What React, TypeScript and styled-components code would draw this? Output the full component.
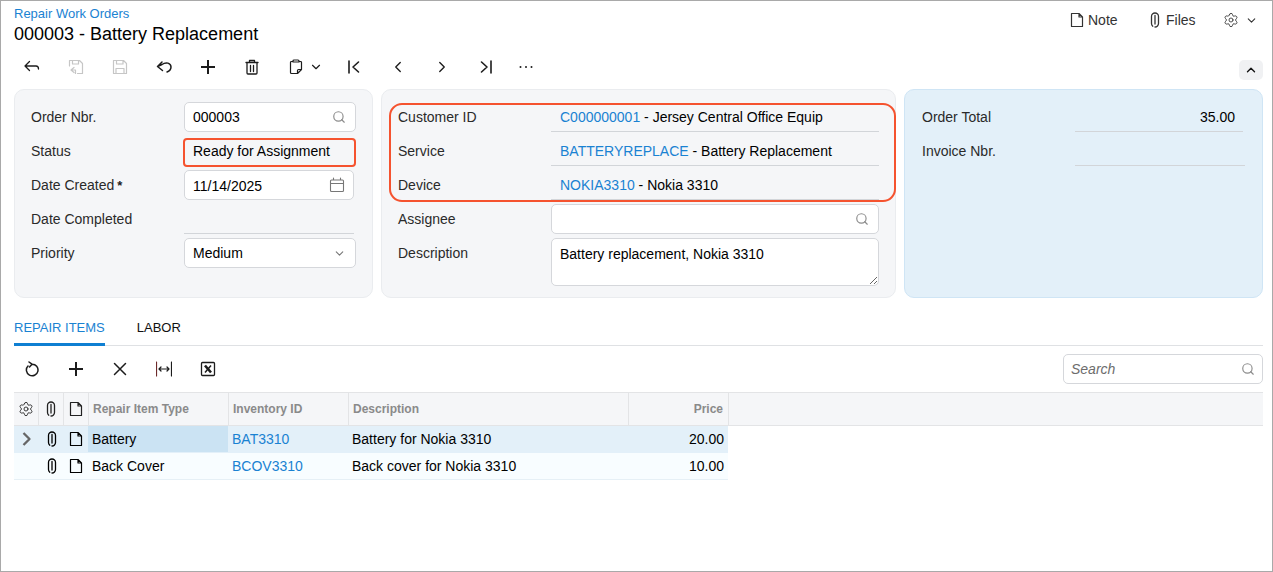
import React from "react";
import styled, { createGlobalStyle } from "styled-components";
import { Search as SearchGlyph, Settings, ChevronDown, ChevronUp, ChevronRight, ChevronLeft } from "lucide-react";

const Global = createGlobalStyle`
  html, body { margin: 0; padding: 0; background: #fff; }
  body { font-family: "Liberation Sans", Arial, sans-serif; font-size: 14px; color: #000; }
`;

const Frame = styled.div`
  width: 1273px; height: 572px; box-sizing: border-box;
  border: 1px solid #a9a9a9; background: #fff; overflow: hidden;
`;
const Header = styled.header`
  height: 50px; padding: 0 14px 0 13px; display: flex; justify-content: space-between; box-sizing: border-box;
`;
const Titles = styled.div`display: flex; flex-direction: column; padding-top: 5px;`;
const Crumb = styled.a`font-size: 13px; line-height: 15px; color: #1a82d2;`;
const Title = styled.h1`margin: 2px 0 0; font-size: 18px; line-height: 22px; font-weight: 400; color: #000;`;
const HeaderActions = styled.div`display: flex; align-items: center; height: 38px; color: #333;`;
const HeaderAction = styled.div<{ $w: number; $gap?: number }>`
  display: flex; align-items: center; gap: ${p => p.$gap ?? 3}px; width: ${p => p.$w}px; font-size: 14px; color: #333;
`;

const Toolbar = styled.div`
  display: flex; align-items: center; height: 32px; padding: 0 9px 0 9px;
`;
const ToolButton = styled.button<{ $w?: number; $off?: boolean }>`
  width: ${p => p.$w ?? 44}px; height: 32px; padding: 0; border: 0; background: none;
  display: flex; align-items: center; justify-content: center; gap: 4px;
  color: ${p => (p.$off ? "#c6c6c6" : "#1c1c1c")};
`;
const SplitButton = styled(ToolButton)`
  justify-content: flex-start; padding-left: 14px; gap: 5px;
`;
const Collapse = styled.button`
  margin: 6px 0 0 auto; width: 24px; height: 20px; padding: 0; border: 0; border-radius: 5px;
  background: #f0f1f3; color: #111; display: flex; align-items: center; justify-content: center;
`;

const Panels = styled.div`display: flex; gap: 8px; margin: 6px 9px 0 13px;`;
const Panel = styled.section<{ $w: number; $blue?: boolean }>`
  position: relative; box-sizing: border-box; width: ${p => p.$w}px; height: 209px;
  padding: 10px 16px 0 ${p => (p.$blue ? 17 : 16)}px; border-radius: 10px;
  border: 1px solid ${p => (p.$blue ? "#cfe5f5" : "#eaecef")};
  background: ${p => (p.$blue ? "#e3f0f9" : "#f5f6f8")};
`;
const Row = styled.div`display: flex; align-items: center; height: 34px;`;
const TopRow = styled(Row)`align-items: flex-start; height: auto;`;
const Label = styled.div`width: 153px; flex: none; color: #2a2a2a; line-height: 16px;`;
const TopLabel = styled(Label)`padding-top: 9px;`;
const Req = styled.span`color: #222; margin-left: -1px; font-weight: 700; font-size: 13px;`;
const Field = styled.div<{ $w: number }>`
  box-sizing: border-box; width: ${p => p.$w}px; height: 30px; padding: 0 8px 0 8px;
  display: flex; align-items: center; justify-content: space-between;
  background: #fff; border: 1px solid #d5d7db; border-radius: 5px; color: #000;
`;
const DateText = styled.span`padding-top: 1px;`;
const Static = styled.div<{ $w: number; $line?: boolean; $right?: boolean }>`
  box-sizing: border-box; width: ${p => p.$w}px; height: 30px; padding: 0 ${p => (p.$right ? 8 : 9)}px;
  display: flex; align-items: center; justify-content: ${p => (p.$right ? "flex-end" : "flex-start")};
  white-space: pre; color: #000;
  border-bottom: ${p => (p.$line ? "1px solid #d2d5d9" : "1px solid transparent")};
`;
const Link = styled.a`color: #1a82d2;`;
const Area = styled.textarea`
  box-sizing: border-box; display: block; width: 328px; height: 48px; margin: 2px 0 0; padding: 7px 8px;
  border: 1px solid #d5d7db; border-radius: 5px; background: #fff; outline: none;
  font: 14px/16px "Liberation Sans", Arial, sans-serif; color: #000;
`;
const Lookup = styled(SearchGlyph)`margin-right: 1px; color: #8d8d8d; flex: none;`;
const SelectArrow = styled(ChevronDown)`margin-right: 1px; color: #777; flex: none;`;
const CalendarSlot = styled.span`color: #777; display: block;`;
const StatusHighlight = styled.div`
  position: absolute; left: 168px; top: 48px; width: 173px; height: 29px; box-sizing: border-box;
  border: 2px solid #f5532f; border-radius: 4px; pointer-events: none;
`;
const CustomerHighlight = styled.div`
  position: absolute; left: 7px; top: 13px; width: 507px; height: 99px; box-sizing: border-box;
  border: 2px solid #f5532f; border-radius: 13px; pointer-events: none;
`;

const Tabs = styled.nav`
  display: flex; gap: 32px; height: 33px; margin: 15px 9px 0 13px; box-sizing: border-box;
  border-bottom: 1px solid #dfe1e4;
`;
const Tab = styled.div<{ $on?: boolean }>`
  height: 33px; box-sizing: border-box; line-height: 30px; font-size: 13px; 
  color: ${p => (p.$on ? "#1a82d2" : "#111")};
  border-bottom: ${p => (p.$on ? "3px solid #0f7fd2" : "0")};
`;
const GridBar = styled.div`
  display: flex; align-items: center; height: 46px; padding: 0 9px 0 9px; box-sizing: border-box;
`;
const SearchBox = styled.label`
  margin-left: auto; box-sizing: border-box; width: 200px; height: 30px; padding: 0 6px 0 7px;
  display: flex; align-items: center; border: 1px solid #d5d7db; border-radius: 5px; background: #fff;
`;
const SearchInput = styled.input`
  flex: 1; min-width: 0; border: 0; outline: 0; padding: 0; background: none;
  font: italic 14px "Liberation Sans", Arial, sans-serif; color: #666;
  &::placeholder { color: #6d6d6d; opacity: 1; }
`;

const Grid = styled.div`margin: 0 9px 0 13px;`;
const HeadRow = styled.div`
  display: flex; height: 34px; box-sizing: border-box; background: #f5f6f8;
  border-top: 1px solid #e3e4e6; border-bottom: 1px solid #e3e4e6;
`;
const HeadCell = styled.div<{ $w: number; $right?: boolean; $icon?: boolean }>`
  box-sizing: border-box; width: ${p => p.$w}px; flex: none; display: flex; align-items: center;
  justify-content: ${p => (p.$icon ? "center" : p.$right ? "flex-end" : "flex-start")};
  padding: ${p => (p.$icon ? "0" : p.$right ? "0 5px 0 4px" : "0 4px")}; border-right: 1px solid #e3e4e6;
  font-size: 12px; font-weight: 700; color: #8a8a8a; text-align: ${p => (p.$right ? "right" : "left")};
  & > svg { color: #222; }
`;
const BodyRow = styled.div<{ $on?: boolean }>`
  display: flex; width: 714px; height: 27px; box-sizing: border-box;
  background: ${p => (p.$on ? "#e3f0f9" : "#f8fdff")};
  border-bottom: 1px solid ${p => (p.$on ? "#e3f0f9" : "#e6f0f6")};
`;
const Cell = styled.div<{ $w: number; $right?: boolean; $icon?: boolean; $sel?: boolean }>`
  box-sizing: border-box; width: ${p => p.$w}px; flex: none; display: flex; align-items: center;
  justify-content: ${p => (p.$icon ? "center" : p.$right ? "flex-end" : "flex-start")};
  padding: ${p => (p.$icon ? "0" : "0 4px")}; color: #000; white-space: pre;
  background: ${p => (p.$sel ? "#cbe3f3" : "transparent")};
`;

const Ico = styled.svg.attrs({ fill: "none", stroke: "currentColor", viewBox: "0 0 16 16" })`
  width: 16px; height: 16px; flex: none; display: block;
  stroke-linecap: round; stroke-linejoin: round;
`;
const RowArrow = styled(Ico)`color: #666;`;

const Back = () => <Ico strokeWidth={1.3}><path d="M5.500 2.500 1 7l4.500 4.500M1 7h11q2.500 0 2.500 3" /></Ico>;
const SaveClose = () => <Ico strokeWidth={1.2}><path d="M1.500 7V1.500h10l3 3v10H9.500M4.500 1.500V5h6V1.500M6 8.500 3 11l3 2.500M3 11h4.500v3.500" /></Ico>;
const Save = () => <Ico strokeWidth={1.2}><path d="M1.500 1.500h10l3 3v10h-13zM4.500 1.500V5H11V1.500M4 14.500v-5h8v5" /></Ico>;
const Undo = () => <Ico strokeWidth={1.5}><path d="M6 3 1.500 7.500l5 4M1.500 7.500 6 5.500C10 2.500 15 4 15 8c0 2.500-1.500 4-4 5" /></Ico>;
const Add = () => <Ico strokeWidth={2}><path d="M8 1v14M1 8h14" strokeLinecap="butt" /></Ico>;
const Trash = () => <Ico strokeWidth={1.3}><path d="M2 3.500h12M5.500 3.500V1.500h5v2M3 3.500v10.500a1 1 0 0 0 1 1h8a1 1 0 0 0 1-1V3.500M6.500 6.500v6M9.500 6.500v6" /></Ico>;
const Clip = () => <Ico strokeWidth={1.2}><path d="M5 2.500H3.500a1 1 0 0 0-1 1v10a1 1 0 0 0 1 1h6l4-4v-7a1 1 0 0 0-1-1H11M5 3V2a1 1 0 0 1 1-1h4a1 1 0 0 1 1 1v1zM9.500 14.500v-3a1 1 0 0 1 1-1h3" /></Ico>;
const First = () => <Ico strokeWidth={1.6}><path d="M3 2v12M12.500 3 7 8l5.500 5" /></Ico>;
const Last = () => <Ico strokeWidth={1.6}><path d="M13 2v12M3.500 3 9 8l-5.500 5" /></Ico>;
const Dots = () => <Ico><circle cx="2.500" cy="8" r="1" fill="currentColor" stroke="none" /><circle cx="8" cy="8" r="1" fill="currentColor" stroke="none" /><circle cx="13.500" cy="8" r="1" fill="currentColor" stroke="none" /></Ico>;
const Note = () => <Ico strokeWidth={1.2}><path d="M2.500 1.500H10l3.500 3.500v9.500h-11zM10 1.500V5h3.500" /></Ico>;
const Attach = () => <Ico strokeWidth={1.3}><path d="M5.800 14.200A3.400 3.400 0 0 1 4.500 11.500V4.500a3.500 3.500 0 0 1 7 0v7a3.500 3.500 0 0 1-3.500 3.500M8 3.500v8.500" /></Ico>;
const Calendar = () => <Ico strokeWidth={1.1}><path d="M2.500 3h11a1 1 0 0 1 1 1v9.500a1 1 0 0 1-1 1h-11a1 1 0 0 1-1-1V4a1 1 0 0 1 1-1zM1.500 6.500h13M4.500 1v2M11.500 1v2" /></Ico>;
const Refresh = () => <Ico strokeWidth={1.5}><path d="M4 5a5.800 5.800 0 1 0 4-1.800M5 1l3 2.200L5.500 6" /></Ico>;
const Remove = () => <Ico strokeWidth={1.5}><path d="M2.500 2.500l11 11M13.500 2.500l-11 11" /></Ico>;
const Fit = () => <Ico strokeWidth={1.2}><path d="M.500 1v14" stroke="#6d2b2b" /><path d="M15.500 1v14M3 8h10M5 6 3 8l2 2M11 6l2 2-2 2" /></Ico>;
const Excel = () => <Ico><rect x="1.500" y="1.500" width="13" height="13" rx="1" strokeWidth={1.3} /><path d="M5 4.500 11 11.500" strokeWidth={2.6} strokeLinecap="butt" /><path d="M11 4.500 5 11.500" strokeWidth={1.500} strokeLinecap="butt" /></Ico>;
const Expand = () => <RowArrow strokeWidth={2.3}><path d="M4.500 2 10.500 8 4.500 14" strokeLinecap="butt" /></RowArrow>;

export default function App() {
  return (
    <Frame>
      <Global />
      <Header>
        <Titles>
          <Crumb>Repair Work Orders</Crumb>
          <Title>000003 - Battery Replacement</Title>
        </Titles>
        <HeaderActions>
          <HeaderAction $w={78}><Note />Note</HeaderAction>
          <HeaderAction $w={76}><Attach />Files</HeaderAction>
          <HeaderAction $w={35} $gap={6}><Settings size={16} strokeWidth={1.3} /><ChevronDown size={13} strokeWidth={2} /></HeaderAction>
        </HeaderActions>
      </Header>
      <Toolbar>
        <ToolButton><Back /></ToolButton>
        <ToolButton $off><SaveClose /></ToolButton>
        <ToolButton $off><Save /></ToolButton>
        <ToolButton><Undo /></ToolButton>
        <ToolButton><Add /></ToolButton>
        <ToolButton><Trash /></ToolButton>
        <SplitButton $w={58}><Clip /><ChevronDown size={14} strokeWidth={2} /></SplitButton>
        <ToolButton><First /></ToolButton>
        <ToolButton><ChevronLeft size={18} strokeWidth={1.8} /></ToolButton>
        <ToolButton><ChevronRight size={18} strokeWidth={1.8} /></ToolButton>
        <ToolButton><Last /></ToolButton>
        <ToolButton $w={36}><Dots /></ToolButton>
        <Collapse aria-label="Collapse"><ChevronUp size={14} strokeWidth={2.4} /></Collapse>
      </Toolbar>
      <Panels>
        <Panel $w={359}>
          <Row><Label>Order Nbr.</Label><Field $w={172}>000003<Lookup size={14} /></Field></Row>
          <Row><Label>Status</Label><Static $w={172}>Ready for Assignment</Static></Row>
          <Row><Label>Date Created <Req>*</Req></Label><Field $w={170}><DateText>11/14/2025</DateText><CalendarSlot><Calendar /></CalendarSlot></Field></Row>
          <Row><Label>Date Completed</Label><Static $w={170} $line /></Row>
          <Row><Label>Priority</Label><Field $w={172}>Medium<SelectArrow size={13} /></Field></Row>
          <StatusHighlight />
        </Panel>
        <Panel $w={515}>
          <Row><Label>Customer ID</Label><Static $w={328} $line><Link>C000000001</Link> - Jersey Central Office Equip</Static></Row>
          <Row><Label>Service</Label><Static $w={328} $line><Link>BATTERYREPLACE</Link> - Battery Replacement</Static></Row>
          <Row><Label>Device</Label><Static $w={328} $line><Link>NOKIA3310</Link> - Nokia 3310</Static></Row>
          <Row><Label>Assignee</Label><Field $w={328}><span /><Lookup size={14} /></Field></Row>
          <TopRow><TopLabel>Description</TopLabel><Area readOnly defaultValue="Battery replacement, Nokia 3310" /></TopRow>
          <CustomerHighlight />
        </Panel>
        <Panel $w={359} $blue>
          <Row><Label>Order Total</Label><Static $w={168} $line $right>35.00</Static></Row>
          <Row><Label>Invoice Nbr.</Label><Static $w={170} $line /></Row>
        </Panel>
      </Panels>
      <Tabs>
        <Tab $on>REPAIR ITEMS</Tab>
        <Tab>LABOR</Tab>
      </Tabs>
      <GridBar>
        <ToolButton><Refresh /></ToolButton>
        <ToolButton><Add /></ToolButton>
        <ToolButton><Remove /></ToolButton>
        <ToolButton><Fit /></ToolButton>
        <ToolButton><Excel /></ToolButton>
        <SearchBox><SearchInput placeholder="Search" /><Lookup size={14} /></SearchBox>
      </GridBar>
      <Grid>
        <HeadRow>
          <HeadCell $w={25} $icon><Settings size={16} strokeWidth={1.3} /></HeadCell>
          <HeadCell $w={25} $icon><Attach /></HeadCell>
          <HeadCell $w={25} $icon><Note /></HeadCell>
          <HeadCell $w={140}>Repair Item Type</HeadCell>
          <HeadCell $w={120}>Inventory ID</HeadCell>
          <HeadCell $w={280}>Description</HeadCell>
          <HeadCell $w={100} $right>Price</HeadCell>
        </HeadRow>
        <BodyRow $on>
          <Cell $w={25} $icon><Expand /></Cell>
          <Cell $w={25} $icon><Attach /></Cell>
          <Cell $w={24} $icon><Note /></Cell>
          <Cell $w={140} $sel>Battery</Cell>
          <Cell $w={120}><Link>BAT3310</Link></Cell>
          <Cell $w={280}>Battery for Nokia 3310</Cell>
          <Cell $w={100} $right>20.00</Cell>
        </BodyRow>
        <BodyRow>
          <Cell $w={25} $icon />
          <Cell $w={25} $icon><Attach /></Cell>
          <Cell $w={24} $icon><Note /></Cell>
          <Cell $w={140}>Back Cover</Cell>
          <Cell $w={120}><Link>BCOV3310</Link></Cell>
          <Cell $w={280}>Back cover for Nokia 3310</Cell>
          <Cell $w={100} $right>10.00</Cell>
        </BodyRow>
      </Grid>
    </Frame>
  );
}
